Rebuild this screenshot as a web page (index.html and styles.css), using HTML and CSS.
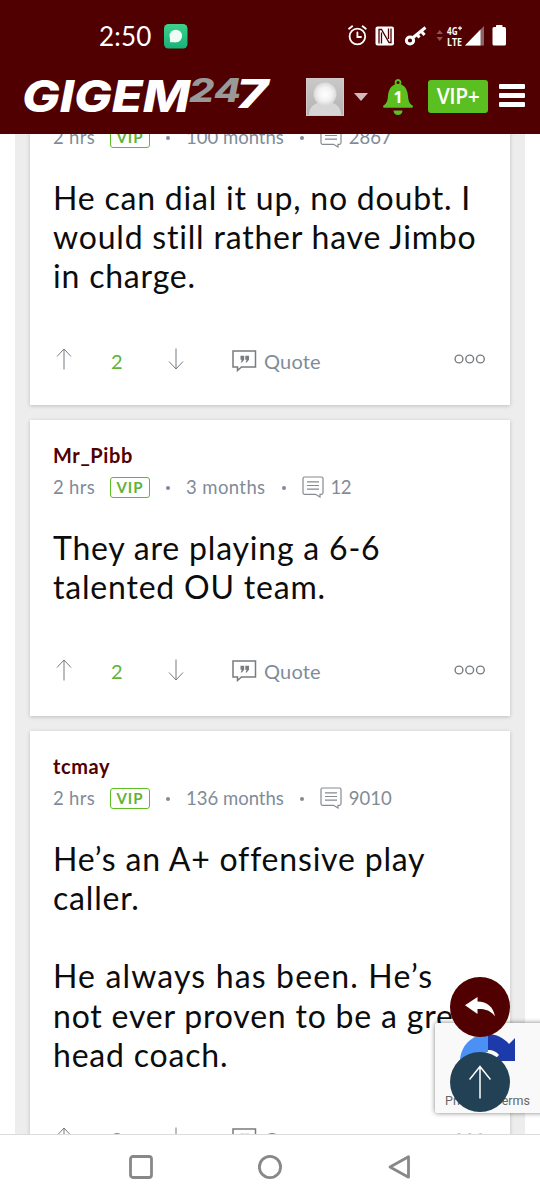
FILE: index.html
```html
<!DOCTYPE html>
<html lang="en">
<head>
    <meta charset="UTF-8">
    <meta name="viewport" content="width=device-width, initial-scale=1.0">
    <title>GigEm247 - Message Board</title>
    <link rel="stylesheet" href="styles.css">
</head>
<body>

<svg class="sprite" width="0" height="0">
    <symbol id="icon-up" viewBox="0 0 16 22">
        <path d="M8 21.5V1M1 8.5L8 1l7 7.5" fill="none" stroke="currentColor"/>
    </symbol>
    <symbol id="icon-down" viewBox="0 0 16 22">
        <path d="M8 .5V21M1 13.500L8 21l7-7.500" fill="none" stroke="currentColor"/>
    </symbol>
    <symbol id="icon-quote" viewBox="0 0 25 22">
        <path d="M1 1h22.500v16H9.500L5.500 20.500V17H1z" fill="none" stroke="currentColor" stroke-width="1.500"/>
        <path d="M8.500 5.800h3.700v4l-2.300 2.600H8.800l1-2.600H8.500zM13.300 5.800H17v4l-2.300 2.600h-1.100l1-2.600h-1.300z" fill="currentColor"/>
    </symbol>
    <symbol id="icon-posts" viewBox="0 0 22 22">
        <path d="M2.500 1h17a1.500 1.500 0 0 1 1.500 1.500v14.300a1.500 1.500 0 0 1-1.500 1.500H18v2.700l-4.500-2.700h-11A1.500 1.500 0 0 1 1 16.800V2.500A1.500 1.500 0 0 1 2.500 1z" fill="none" stroke="currentColor" stroke-width="1.200"/>
        <path d="M5 5.800h12M5 9.500h12M5 13.200h12" stroke="currentColor" stroke-width="1.200"/>
    </symbol>
    <symbol id="icon-more" viewBox="0 0 32 10">
        <g fill="none" stroke="currentColor" stroke-width="1.400">
            <circle cx="5" cy="5" r="3.900"/><circle cx="15.700" cy="5" r="3.900"/><circle cx="26.400" cy="5" r="3.900"/>
        </g>
    </symbol>
</svg>

<header class="top">
    <div class="status-bar">
        <span class="clock">2:50</span>
        <svg class="sms" width="24" height="25" viewBox="0 0 24 25">
            <defs><linearGradient id="smsFill" x1="0" y1="0" x2="0" y2="1"><stop offset="0" stop-color="#3fd08d"/><stop offset="1" stop-color="#16b377"/></linearGradient></defs>
            <rect width="23.500" height="24.500" rx="4.500" fill="url(#smsFill)"/>
            <circle cx="11.800" cy="12" r="6.300" fill="#effcf6"/>
            <path d="M6 13v5.200h6z" fill="#effcf6"/>
        </svg>
        <div class="status-icons">
            <svg width="158" height="26" viewBox="0 0 158 26">
                <!-- alarm -->
                <g fill="none" stroke="#fff" stroke-width="1.800" stroke-linecap="round">
                    <circle cx="10.400" cy="13.500" r="7.800"/>
                    <path d="M10.400 9.500v4.500h3.600M2 5.800l3.200-2.600M18.800 5.800l-3.200-2.600"/>
                </g>
                <!-- nfc -->
                <rect x="28.500" y="3.500" width="18.500" height="19" rx="2" fill="#fff"/>
                <path d="M32 20.500V6.500h2.500l7.500 13h2V5.500M34.500 9.500V20.500M41.500 5.500V16" fill="none" stroke="#500000" stroke-width="1.300"/>
                <!-- vpn key -->
                <g fill="none" stroke="#fff" stroke-width="3">
                    <circle cx="63" cy="17.500" r="3.600"/>
                    <path d="M65.500 15L78.500 4.500M74 8l3.500 4M70 11.500l2.500 3"/>
                </g>
                <path d="M89.500 11l3.200-4 3.200 4zM89.500 14l3.200 4 3.200-4z" fill="#8a5555"/>
                <text class="network" x="100" y="11.500" textLength="10.500" lengthAdjust="spacingAndGlyphs">4G</text>
                <path d="M113 3.200v4M111 5.200h4" stroke="#fff" stroke-width="1.200"/>
                <text class="network" x="100" y="23" textLength="15" lengthAdjust="spacingAndGlyphs">LTE</text>
                <path d="M118 22.500L137 3v19.500z" fill="#866"/>
                <path d="M118 22.500L133.500 6.500v16z" fill="#fff"/>
                <rect x="149" y="2" width="6.500" height="4" rx=".8" fill="#fff"/>
                <rect x="145.500" y="4" width="13.500" height="18.500" rx="1.500" fill="#fff"/>
            </svg>
        </div>
    </div>

    <div class="site-bar">
        <svg class="logo" width="250" height="36" viewBox="0 0 250 36">
            <text class="logo-gigem" x="0" y="33" textLength="168" lengthAdjust="spacingAndGlyphs">GIGEM</text>
            <text class="logo-24" x="167" y="23" textLength="52" lengthAdjust="spacingAndGlyphs">24</text>
            <text class="logo-7" x="214" y="29" textLength="32" lengthAdjust="spacingAndGlyphs">7</text>
        </svg>
        <svg class="avatar" width="38" height="38" viewBox="0 0 38 38">
            <defs>
                <radialGradient id="head"><stop offset="0" stop-color="#fff"/><stop offset=".6" stop-color="#f2f2f2"/><stop offset="1" stop-color="#d8d8d8"/></radialGradient>
                <linearGradient id="back" x1="0" y1="0" x2="0" y2="1"><stop offset="0" stop-color="#c9c9c9"/><stop offset="1" stop-color="#b3b3b3"/></linearGradient>
            </defs>
            <rect width="38" height="38" fill="url(#back)"/>
            <path d="M3 37c0-9 6-13 16-13s16 4 16 13z" fill="#d6d6d6"/>
            <circle cx="19" cy="16" r="11.500" fill="url(#head)"/>
            <rect x=".5" y=".5" width="37" height="37" fill="none" stroke="#d5caca"/>
        </svg>
        <svg class="caret" width="14" height="8" viewBox="0 0 14 8"><path d="M0 0h14L7 8z" fill="#d3b9bb"/></svg>
        <div class="alerts">
            <svg width="30" height="37" viewBox="0 0 30 37">
                <path d="M15 0a3.500 3.500 0 0 1 2.800 5.300C23 7.500 24.500 12 25 17c.4 5 1.500 7.500 4.500 9.500.8.700.5 2.300-.5 2.300H1C0 28.800-.3 27.200.5 26.500 3.500 24.500 4.600 22 5 17c.5-5 2-9.500 7.200-11.700A3.500 3.500 0 0 1 15 0z" fill="#5bbf21"/>
                <circle cx="15" cy="3.500" r="1.500" fill="#500000"/>
                <path d="M10.500 31.500h9c0 6-9 6-9 0z" fill="#5bbf21"/>
            </svg>
            <span class="alerts-count">1</span>
        </div>
        <a class="vip-button">VIP+</a>
        <div class="menu"><i></i><i></i><i></i></div>
    </div>
</header>

<main class="viewport">
    <div class="feed">
        <article class="post post-first">
            <div class="author">Aggie</div>
            <div class="meta">
                <span class="age">2 hrs</span><span class="vip">VIP</span><i class="dot"></i><span>100 months</span><i class="dot"></i>
                <svg class="posts-icon"><use href="#icon-posts"/></svg><span>2867</span>
            </div>
            <div class="message">
                <p>He can dial it up, no doubt. I<br>would still rather have Jimbo<br>in charge.</p>
            </div>
            <div class="actions">
                <svg class="arrow"><use href="#icon-up"/></svg>
                <span class="score">2</span>
                <svg class="arrow"><use href="#icon-down"/></svg>
                <svg class="quote-icon"><use href="#icon-quote"/></svg>
                <span class="quote">Quote</span>
                <svg class="more"><use href="#icon-more"/></svg>
            </div>
        </article>

        <article class="post">
            <div class="author">Mr_Pibb</div>
            <div class="meta">
                <span class="age">2 hrs</span><span class="vip">VIP</span><i class="dot"></i><span class="short">3 months</span><i class="dot"></i>
                <svg class="posts-icon"><use href="#icon-posts"/></svg><span class="count-short">12</span>
            </div>
            <div class="message">
                <p>They are playing a 6-6<br>talented OU team.</p>
            </div>
            <div class="actions">
                <svg class="arrow"><use href="#icon-up"/></svg>
                <span class="score">2</span>
                <svg class="arrow"><use href="#icon-down"/></svg>
                <svg class="quote-icon"><use href="#icon-quote"/></svg>
                <span class="quote">Quote</span>
                <svg class="more"><use href="#icon-more"/></svg>
            </div>
        </article>

        <article class="post">
            <div class="author">tcmay</div>
            <div class="meta">
                <span class="age">2 hrs</span><span class="vip">VIP</span><i class="dot"></i><span>136 months</span><i class="dot"></i>
                <svg class="posts-icon"><use href="#icon-posts"/></svg><span>9010</span>
            </div>
            <div class="message">
                <p>He’s an A+ offensive play<br>caller.</p>
                <p><span class="loose">He always has been. He’s</span><br>not ever proven to be a great<br>head coach.</p>
            </div>
            <div class="actions">
                <svg class="arrow"><use href="#icon-up"/></svg>
                <span class="score">2</span>
                <svg class="arrow"><use href="#icon-down"/></svg>
                <svg class="quote-icon"><use href="#icon-quote"/></svg>
                <span class="quote">Quote</span>
                <svg class="more"><use href="#icon-more"/></svg>
            </div>
        </article>
    </div>
</main>

<div class="recaptcha">
    <svg width="56" height="56" viewBox="0 0 56 56">
        <path d="M28 0v18c-5 0-8 4-8 9l-9-7-11 8C0 12 12 0 28 0z" fill="#4a90f5"/>
        <path d="M28 0c8 0 16 4 21 10l6-6v23H33l6-6c-2-3-6-5-11-5z" fill="#1c3aa9"/>
        <path d="M0 28h20l-6 7c3 4 8 7 14 7 5 0 9-2 12-6l10 10c-5 6-13 10-22 10C12 56 0 44 0 28z" fill="#ababab"/>
    </svg>
    <div class="recaptcha-links">Privacy - Terms</div>
</div>
<div class="fab fab-reply">
    <svg width="30" height="20" viewBox="0 0 30 20"><path d="M0 8.200L12.500 0v4.500C22 4.500 28.500 10 30 19.500 26 13.500 20 11.800 12.500 12v5z" fill="#fff"/></svg>
</div>
<div class="fab fab-top">
    <svg width="22" height="34" viewBox="0 0 22 34"><path d="M11 33.500V1M.5 14.500L11 1.500l10.500 13" fill="none" stroke="#fff" stroke-width="1.500"/></svg>
</div>

<nav class="nav-bar">
    <svg width="26" height="26" viewBox="0 0 26 26"><rect x="2.500" y="2.500" width="21" height="21" rx="2.500" fill="none" stroke="#888" stroke-width="2.800"/></svg>
    <svg width="26" height="26" viewBox="0 0 26 26"><circle cx="13" cy="13" r="10.600" fill="none" stroke="#888" stroke-width="2.800"/></svg>
    <svg width="26" height="26" viewBox="0 0 26 26"><path d="M22.500 2.800v20.400L4 13z" fill="none" stroke="#888" stroke-width="2.800" stroke-linejoin="round"/></svg>
</nav>

</body>
</html>
```
FILE: styles.css
```css
* {
    box-sizing: border-box;
    margin: 0;
    padding: 0;
}

body {
    width: 540px;
    height: 1200px;
    display: flex;
    flex-direction: column;
    overflow: hidden;
    background-color: #fff;
    font-family: Lato, 'Liberation Sans', sans-serif;
}

svg {
    display: block;
    flex-shrink: 0;
}

.sprite {
    position: absolute;
}

/* header */
.top {
    height: 134px;
    flex-shrink: 0;
    background-color: #500000;
    color: #fff;
}

.status-bar {
    height: 72px;
    display: flex;
    align-items: center;
    padding-left: 99px;
}

.clock {
    width: 65px;
    font-size: 26px;
    letter-spacing: 0.2px;
}

.status-icons {
    margin-left: 159px;
}

.status-icons svg,
.logo {
    overflow: visible;
}

.network {
    font: 700 11px 'Open Sans', sans-serif;
    fill: #fff;
}

.site-bar {
    height: 50px;
    display: flex;
    align-items: center;
    padding-left: 22px;
}

.logo text {
    font-family: Inter, 'Liberation Sans', sans-serif;
    font-weight: 800;
    font-style: italic;
    fill: #fff;
}

.logo .logo-gigem {
    font-size: 44px;
}

.logo .logo-24 {
    font-size: 32px;
    fill: #999;
}

.logo .logo-7 {
    font-size: 39px;
}

.avatar {
    margin-left: 34px;
}

.caret {
    margin-left: 10px;
}

.alerts {
    position: relative;
    margin-left: 15px;
}

.alerts-count {
    position: absolute;
    left: 0;
    top: 7px;
    width: 30px;
    text-align: center;
    font: 700 16px/22px 'Open Sans', sans-serif;
}

.vip-button {
    width: 60px;
    height: 33px;
    margin-left: 15px;
    margin-top: -1px;
    border-radius: 3px;
    background-color: #5bbf21;
    text-align: center;
    font: 600 21px/32px 'Open Sans', sans-serif;
    letter-spacing: -0.5px;
}

.menu {
    width: 26px;
    margin-left: 11px;
    margin-top: -3px;
    display: flex;
    flex-direction: column;
    gap: 4px;
}

.menu i {
    height: 4.700px;
    border-radius: 1px;
    background-color: #fff;
}

/* posts */
.viewport {
    height: 1000px;
    flex-shrink: 0;
    overflow: hidden;
    padding: 0 15px;
}

.feed {
    height: 1000px;
    padding: 0 15px;
    background-color: #ededed;
}

.post {
    margin-bottom: 15px;
    padding: 23px 23px 30px;
    background-color: #fff;
    box-shadow: 0 1px 4px rgba(0, 0, 0, 0.2);
}

.post-first {
    margin-top: -64px;
    padding-bottom: 29px;
}

.feed::before {
    content: '';
    display: table;
}

.author {
    height: 24px;
    line-height: 24px;
    font-size: 20px;
    font-weight: 700;
    letter-spacing: 0.6px;
    color: #500000;
}

.meta {
    height: 24px;
    margin-top: 8px;
    display: flex;
    align-items: center;
    white-space: nowrap;
    font-size: 18.500px;
    color: #7f8c98;
}

.age {
    width: 57px;
    letter-spacing: 0.3px;
}

.short {
    letter-spacing: 0.400px;
}

.count-short {
    letter-spacing: -0.5px;
}

.vip {
    width: 40px;
    height: 21px;
    margin-top: 1px;
    border: 1.500px solid #5bbf21;
    border-radius: 3px;
    text-align: center;
    font-size: 15px;
    font-weight: 700;
    line-height: 18px;
    letter-spacing: 1px;
    color: #5fb336;
}

.dot {
    width: 4px;
    height: 4px;
    margin: 2px 16px 0;
    border-radius: 50%;
    background-color: #7f8c98;
}

.posts-icon {
    width: 22px;
    height: 22px;
    margin-right: 7px;
    color: #858b90;
}

.message {
    margin-top: 29px;
    font-size: 32px;
    line-height: 39.200px;
    letter-spacing: 0.800px;
    white-space: nowrap;
    color: #0c0c0c;
}

.message p + p {
    margin-top: 39px;
}

.loose {
    letter-spacing: 1.150px;
}

.actions {
    height: 30px;
    margin-top: 50px;
    display: flex;
    align-items: center;
    font-size: 20px;
    color: #777c80;
}

.arrow {
    width: 16px;
    height: 22px;
    margin: -3px 0 0 3px;
}

.score {
    width: 57px;
    margin-left: 39px;
    color: #5fb336;
}

.score + .arrow {
    margin-left: 0;
}

.quote-icon {
    width: 25px;
    height: 22px;
    margin-left: 48px;
}

.quote {
    margin-left: 7px;
    letter-spacing: 0.2px;
    color: #7f8c98;
}

.more {
    width: 32px;
    height: 10px;
    margin: -3px 1px 0 auto;
}

/* floating items */
.recaptcha {
    position: absolute;
    left: 435px;
    top: 1023px;
    width: 120px;
    height: 90px;
    padding-top: 11px;
    padding-left: 10px;
    border-radius: 2px;
    background-color: #f9f9f9;
    box-shadow: 0 0 5px rgba(0, 0, 0, 0.5);
}

.recaptcha svg {
    margin-left: 15px;
}

.recaptcha-links {
    margin-top: 3px;
    font: 12.500px/16px Roboto, sans-serif;
    color: #666;
}

.fab {
    position: absolute;
    left: 450px;
    width: 60px;
    height: 60px;
    border-radius: 50%;
    display: flex;
    align-items: center;
    justify-content: center;
}

.fab-reply {
    top: 977px;
    background-color: #500000;
}

.fab-top {
    top: 1052px;
    background-color: #234155;
}

/* system navigation */
.nav-bar {
    height: 66px;
    flex-shrink: 0;
    display: flex;
    align-items: center;
    gap: 103px;
    padding-left: 128px;
    padding-bottom: 2px;
    border-top: 1px solid #dcdcdc;
    background-color: #fff;
}
```
